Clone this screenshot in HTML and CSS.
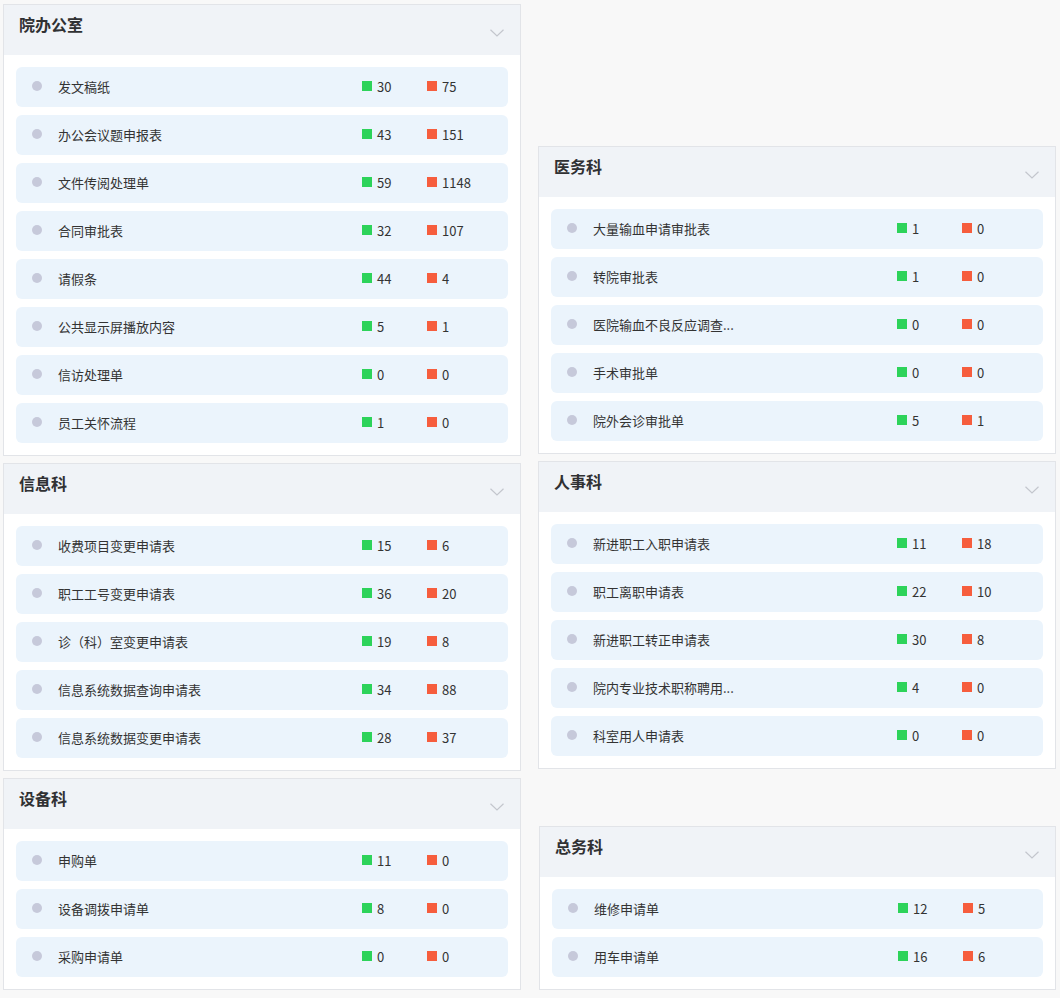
FILE: index.html
```html
<!DOCTYPE html>
<html lang="zh-CN">
<head>
<meta charset="utf-8">
<title>部门流程统计</title>
<link rel="stylesheet" href="styles.css">
</head>
<body>
<div class="board">
  <div class="col">
    <section class="card">
      <header class="card-head"><h2 class="card-title">院办公室</h2><svg class="chev" width="14" height="8" viewBox="0 0 14 8"><polyline points="0.5,0.8 7,7 13.5,0.8"/></svg></header>
      <div class="card-body">
        <div class="item"><span class="dot"></span><span class="name">发文稿纸</span><span class="stat"><i class="sq g"></i>30</span><span class="stat"><i class="sq r"></i>75</span></div>
        <div class="item"><span class="dot"></span><span class="name">办公会议题申报表</span><span class="stat"><i class="sq g"></i>43</span><span class="stat"><i class="sq r"></i>151</span></div>
        <div class="item"><span class="dot"></span><span class="name">文件传阅处理单</span><span class="stat"><i class="sq g"></i>59</span><span class="stat"><i class="sq r"></i>1148</span></div>
        <div class="item"><span class="dot"></span><span class="name">合同审批表</span><span class="stat"><i class="sq g"></i>32</span><span class="stat"><i class="sq r"></i>107</span></div>
        <div class="item"><span class="dot"></span><span class="name">请假条</span><span class="stat"><i class="sq g"></i>44</span><span class="stat"><i class="sq r"></i>4</span></div>
        <div class="item"><span class="dot"></span><span class="name">公共显示屏播放内容</span><span class="stat"><i class="sq g"></i>5</span><span class="stat"><i class="sq r"></i>1</span></div>
        <div class="item"><span class="dot"></span><span class="name">信访处理单</span><span class="stat"><i class="sq g"></i>0</span><span class="stat"><i class="sq r"></i>0</span></div>
        <div class="item"><span class="dot"></span><span class="name">员工关怀流程</span><span class="stat"><i class="sq g"></i>1</span><span class="stat"><i class="sq r"></i>0</span></div>
      </div>
    </section>
    <section class="card">
      <header class="card-head"><h2 class="card-title">信息科</h2><svg class="chev" width="14" height="8" viewBox="0 0 14 8"><polyline points="0.5,0.8 7,7 13.5,0.8"/></svg></header>
      <div class="card-body">
        <div class="item"><span class="dot"></span><span class="name">收费项目变更申请表</span><span class="stat"><i class="sq g"></i>15</span><span class="stat"><i class="sq r"></i>6</span></div>
        <div class="item"><span class="dot"></span><span class="name">职工工号变更申请表</span><span class="stat"><i class="sq g"></i>36</span><span class="stat"><i class="sq r"></i>20</span></div>
        <div class="item"><span class="dot"></span><span class="name">诊（科）室变更申请表</span><span class="stat"><i class="sq g"></i>19</span><span class="stat"><i class="sq r"></i>8</span></div>
        <div class="item"><span class="dot"></span><span class="name">信息系统数据查询申请表</span><span class="stat"><i class="sq g"></i>34</span><span class="stat"><i class="sq r"></i>88</span></div>
        <div class="item"><span class="dot"></span><span class="name">信息系统数据变更申请表</span><span class="stat"><i class="sq g"></i>28</span><span class="stat"><i class="sq r"></i>37</span></div>
      </div>
    </section>
    <section class="card">
      <header class="card-head"><h2 class="card-title">设备科</h2><svg class="chev" width="14" height="8" viewBox="0 0 14 8"><polyline points="0.5,0.8 7,7 13.5,0.8"/></svg></header>
      <div class="card-body">
        <div class="item"><span class="dot"></span><span class="name">申购单</span><span class="stat"><i class="sq g"></i>11</span><span class="stat"><i class="sq r"></i>0</span></div>
        <div class="item"><span class="dot"></span><span class="name">设备调拨申请单</span><span class="stat"><i class="sq g"></i>8</span><span class="stat"><i class="sq r"></i>0</span></div>
        <div class="item"><span class="dot"></span><span class="name">采购申请单</span><span class="stat"><i class="sq g"></i>0</span><span class="stat"><i class="sq r"></i>0</span></div>
      </div>
    </section>
  </div>
  <div class="col col-right">
    <section class="card">
      <header class="card-head"><h2 class="card-title">医务科</h2><svg class="chev" width="14" height="8" viewBox="0 0 14 8"><polyline points="0.5,0.8 7,7 13.5,0.8"/></svg></header>
      <div class="card-body">
        <div class="item"><span class="dot"></span><span class="name">大量输血申请审批表</span><span class="stat"><i class="sq g"></i>1</span><span class="stat"><i class="sq r"></i>0</span></div>
        <div class="item"><span class="dot"></span><span class="name">转院审批表</span><span class="stat"><i class="sq g"></i>1</span><span class="stat"><i class="sq r"></i>0</span></div>
        <div class="item"><span class="dot"></span><span class="name">医院输血不良反应调查...</span><span class="stat"><i class="sq g"></i>0</span><span class="stat"><i class="sq r"></i>0</span></div>
        <div class="item"><span class="dot"></span><span class="name">手术审批单</span><span class="stat"><i class="sq g"></i>0</span><span class="stat"><i class="sq r"></i>0</span></div>
        <div class="item"><span class="dot"></span><span class="name">院外会诊审批单</span><span class="stat"><i class="sq g"></i>5</span><span class="stat"><i class="sq r"></i>1</span></div>
      </div>
    </section>
    <section class="card">
      <header class="card-head"><h2 class="card-title">人事科</h2><svg class="chev" width="14" height="8" viewBox="0 0 14 8"><polyline points="0.5,0.8 7,7 13.5,0.8"/></svg></header>
      <div class="card-body">
        <div class="item"><span class="dot"></span><span class="name">新进职工入职申请表</span><span class="stat"><i class="sq g"></i>11</span><span class="stat"><i class="sq r"></i>18</span></div>
        <div class="item"><span class="dot"></span><span class="name">职工离职申请表</span><span class="stat"><i class="sq g"></i>22</span><span class="stat"><i class="sq r"></i>10</span></div>
        <div class="item"><span class="dot"></span><span class="name">新进职工转正申请表</span><span class="stat"><i class="sq g"></i>30</span><span class="stat"><i class="sq r"></i>8</span></div>
        <div class="item"><span class="dot"></span><span class="name">院内专业技术职称聘用...</span><span class="stat"><i class="sq g"></i>4</span><span class="stat"><i class="sq r"></i>0</span></div>
        <div class="item"><span class="dot"></span><span class="name">科室用人申请表</span><span class="stat"><i class="sq g"></i>0</span><span class="stat"><i class="sq r"></i>0</span></div>
      </div>
    </section>
    <section class="card card-last">
      <header class="card-head"><h2 class="card-title">总务科</h2><svg class="chev" width="14" height="8" viewBox="0 0 14 8"><polyline points="0.5,0.8 7,7 13.5,0.8"/></svg></header>
      <div class="card-body">
        <div class="item"><span class="dot"></span><span class="name">维修申请单</span><span class="stat"><i class="sq g"></i>12</span><span class="stat"><i class="sq r"></i>5</span></div>
        <div class="item"><span class="dot"></span><span class="name">用车申请单</span><span class="stat"><i class="sq g"></i>16</span><span class="stat"><i class="sq r"></i>6</span></div>
      </div>
    </section>
  </div>
</div>
</body>
</html>
```

FILE: styles.css
```css
* { box-sizing: border-box; }
html, body { margin: 0; }
body {
  background: #f8f8f8;
  font-family: "Noto Sans CJK SC", "Microsoft YaHei", sans-serif;
  color: #333;
  padding: 4px 3px;
}
.board {
  display: flex;
  gap: 17px;
  align-items: flex-start;
}
.col {
  width: 518px;
  display: flex;
  flex-direction: column;
  gap: 7px;
}
.col-right { padding-top: 142px; }
.card-last { margin-top: 50px; margin-left: 1px; }
.card {
  background: #fff;
  border: 1px solid #e2e4e8;
}
.card-head {
  height: 50px;
  background: #f0f3f7;
  padding: 0 16px 0 15px;
  display: flex;
  justify-content: space-between;
  align-items: flex-start;
}
.card-title {
  margin: 0;
  padding-top: 8px;
  font-size: 16px;
  line-height: 22px;
  font-weight: 700;
  color: #303133;
}
.chev {
  margin-top: 24px;
  fill: none;
  stroke: #c3c6cd;
  stroke-width: 1.2;
}
.card-body {
  padding: 12px;
  display: flex;
  flex-direction: column;
  gap: 8px;
}
.item {
  height: 40px;
  background: #ebf4fc;
  border-radius: 6px;
  display: flex;
  align-items: center;
  padding-left: 16px;
  padding-bottom: 2px;
  font-size: 13px;
}
.dot {
  width: 10px;
  height: 10px;
  border-radius: 50%;
  background: #c6c9da;
  flex: none;
}
.name {
  width: 304px;
  margin-left: 16px;
  color: #333;
  white-space: nowrap;
  flex: none;
}
.stat {
  width: 65px;
  display: flex;
  align-items: center;
  gap: 5px;
  color: #333;
  flex: none;
}
.sq {
  width: 10px;
  height: 10px;
  display: inline-block;
}
.sq.g { background: #2dd35a; }
.sq.r { background: #f65d3d; }
```
